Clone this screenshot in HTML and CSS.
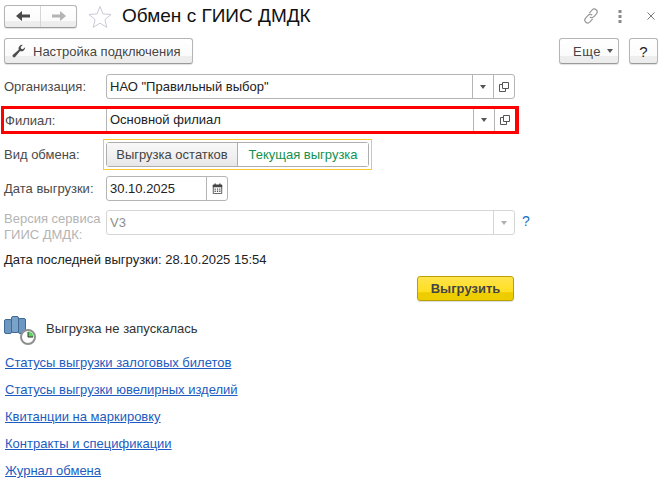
FILE: index.html
```html
<!DOCTYPE html>
<html lang="ru">
<head>
<meta charset="utf-8">
<title>Обмен с ГИИС ДМДК</title>
<link rel="stylesheet" href="styles.css">
</head>
<body>
<header class="titlebar">
  <div class="nav btn">
    <span class="nav-cell"><svg width="16" height="12" viewBox="0 0 16 12"><path d="M1 6l6-5v3.400h8v3.200H7V11z" fill="#4a4a4a"/></svg></span>
    <span class="nav-cell"><svg width="16" height="12" viewBox="0 0 16 12"><path d="M15 6L9 1v3.400H1v3.200h8V11z" fill="#b4b4b4"/></svg></span>
  </div>
  <svg class="star" width="24" height="23" viewBox="0 0 24 23"><path d="M12 1.500l3 7.400 8 .6-6.100 5.100 1.900 7.800L12 18.200l-6.800 4.200 1.900-7.800L1 9.500l8-.6z" fill="#fff" stroke="#c9c9d6"/></svg>
  <h1 class="title">Обмен с ГИИС ДМДК</h1>
  <div class="window-tools">
    <svg width="18" height="18" viewBox="0 0 16 16" fill="none" stroke="#969696" stroke-width="1"><path d="M6.500 5.500l2.600-3a2.600 2.600 0 0 1 3.900 3.400l-2.400 2.700a2.600 2.600 0 0 1-3.700.2"/><path d="M9.500 10.500l-2.600 3A2.600 2.600 0 0 1 3 10.100l2.400-2.700a2.600 2.600 0 0 1 3.700-.2"/></svg>
    <svg class="dots" width="4" height="13" viewBox="0 0 4 13" fill="#8a8a8a"><rect x="0.500" y="0" width="3" height="3"/><rect x="0.500" y="5" width="3" height="3"/><rect x="0.500" y="10" width="3" height="3"/></svg>
    <svg class="close" width="8" height="8" viewBox="0 0 8 8" stroke="#777" fill="none"><path d="M.5.500l7 7M7.500.500l-7 7"/></svg>
  </div>
</header>

<div class="commandbar">
  <button class="btn cmd settings">
    <svg width="14" height="14" viewBox="0 0 16 16"><path d="M15 3.600a4.300 4.300 0 0 1-5.700 4.500L3.800 14.600a1.800 1.800 0 0 1-2.700-2.400l6.600-5.600A4.300 4.300 0 0 1 12.300 1L9.900 3.400l.5 2 2 .5z" fill="#4d4d4d"/></svg>
    Настройка подключения
  </button>
  <button class="btn cmd more"><span class="more-text">Еще</span><i class="caret"></i></button>
  <button class="btn cmd help">?</button>
</div>

<main class="form">
  <div class="row row-org">
    <label class="label">Организация:</label>
    <div class="field wide">
      <span class="value">НАО "Правильный выбор"</span>
      <span class="cell"><i class="caret"></i></span>
      <span class="cell"><svg width="10" height="10" viewBox="0 0 10 10" fill="none" stroke="#555"><path d="M3.500.500h6v6h-6z"/><path d="M3.500 2.500H.500v7h6V6.500"/></svg></span>
    </div>
  </div>
  <div class="row row-highlight">
    <label class="label">Филиал:</label>
    <div class="field wide">
      <span class="value">Основной филиал</span>
      <span class="cell"><i class="caret"></i></span>
      <span class="cell"><svg width="10" height="10" viewBox="0 0 10 10" fill="none" stroke="#555"><path d="M3.500.500h6v6h-6z"/><path d="M3.500 2.500H.500v7h6V6.500"/></svg></span>
    </div>
  </div>
  <div class="row row-mode">
    <label class="label">Вид обмена:</label>
    <div class="toggle-frame">
      <div class="toggle">
        <span class="opt opt-off">Выгрузка остатков</span>
        <span class="opt opt-on">Текущая выгрузка</span>
      </div>
    </div>
  </div>
  <div class="row row-date">
    <label class="label">Дата выгрузки:</label>
    <div class="field date">
      <span class="value">30.10.2025</span>
      <span class="cell"><svg width="11" height="11" viewBox="0 0 13 13"><path d="M1.500 2.500h10v10h-10z" fill="#fff" stroke="#444"/><path d="M1 2h11v3H1zM3 .500h1.500V3H3zM8.500.500H10V3H8.500z" fill="#444"/><path d="M3 6.500h1.500V8H3zM5.800 6.500h1.500V8H5.800zM8.500 6.500H10V8H8.500zM3 9h1.500v1.500H3zM5.800 9h1.500v1.500H5.800zM8.500 9H10v1.500H8.500z" fill="#555"/></svg></span>
    </div>
  </div>
  <div class="row row-version">
    <label class="label label-muted">Версия сервиса ГИИС ДМДК:</label>
    <div class="field wide field-muted">
      <span class="value">V3</span>
      <span class="cell"><i class="caret"></i></span>
    </div>
    <a class="hint">?</a>
  </div>
  <p class="last-date">Дата последней выгрузки: 28.10.2025 15:54</p>
  <div class="action">
    <button class="btn-primary">Выгрузить</button>
  </div>
  <div class="status">
    <svg width="34" height="34" viewBox="0 0 34 34">
      <rect x="2.500" y="8.500" width="7" height="14" rx="1.500" fill="#6d97c0" stroke="#3f6a93"/>
      <rect x="9.500" y="5.500" width="7" height="16" rx="1.500" fill="#7ba3ca" stroke="#3f6a93"/>
      <rect x="16.500" y="7.500" width="7" height="15" rx="1.500" fill="#6d97c0" stroke="#3f6a93"/>
      <circle cx="26" cy="26" r="7" fill="#fff" stroke="#8f8f8f" stroke-width="2"/>
      <path d="M26 26v-5.500a5.500 5.500 0 0 1 5.500 5.500z" fill="#5fd35f"/>
      <path d="M26 21v5h5" fill="none" stroke="#333"/>
    </svg>
    <span class="status-text">Выгрузка не запускалась</span>
  </div>
  <nav class="links">
    <a href="#">Статусы выгрузки залоговых билетов</a>
    <a href="#">Статусы выгрузки ювелирных изделий</a>
    <a href="#">Квитанции на маркировку</a>
    <a href="#">Контракты и спецификации</a>
    <a href="#">Журнал обмена</a>
  </nav>
</main>
</body>
</html>
```
FILE: styles.css
```css
* { box-sizing: border-box; }
html, body { margin: 0; padding: 0; }
body {
  width: 665px;
  height: 483px;
  overflow: hidden;
  background: #fff;
  color: #333;
  font: 13px/15px "Liberation Sans", Arial, sans-serif;
}
.btn {
  background: linear-gradient(#fff 0, #fbfbfb 70%, #eeeeee 72%, #ececec 100%);
  border: 1px solid #b5b5b5;
  border-bottom-color: #9a9a9a;
  border-radius: 3px;
  box-shadow: 0 1px 1px rgba(0,0,0,.12);
}
.titlebar {
  display: flex;
  align-items: center;
  height: 28px;
  padding: 4px 0 0 4px;
}
.nav { display: flex; width: 73px; height: 23px; }
.nav-cell {
  flex: 1;
  display: flex;
  align-items: center;
  justify-content: center;
}
.nav-cell + .nav-cell { border-left: 1px solid #d6d6d6; }
.star { margin-left: 11px; }
.title {
  margin: 0 0 0 10px;
  font-size: 19px;
  line-height: 24px;
  font-weight: 400;
  color: #111;
}
.window-tools {
  margin-left: auto;
  display: flex;
  align-items: center;
  padding-right: 10px;
}
.dots { margin-left: 18px; }
.close { margin-left: 25px; }
.commandbar {
  display: flex;
  gap: 10px;
  padding: 10px 7px 0 4px;
}
.cmd {
  height: 26px;
  padding: 0;
  font: inherit;
  color: #444;
  display: flex;
  align-items: center;
  justify-content: center;
}
.settings { width: 189px; gap: 7px; margin-right: auto; justify-content: flex-start; padding-left: 7px; }
.more { width: 60px; gap: 6px; justify-content: flex-end; padding-right: 5px; }
.more-text { letter-spacing: .5px; }
.help { width: 29px; font-size: 15px; font-weight: 400; color: #222; }
.caret {
  display: inline-block;
  width: 0;
  height: 0;
  border: 3.500px solid transparent;
  border-top: 4px solid #555;
  border-bottom: 0;
}
.form { padding-top: 10px; }
.row { display: flex; align-items: center; }
.label { width: 106px; padding-left: 4px; color: #4a4a4a; flex: none; }
.field {
  display: flex;
  align-items: stretch;
  height: 25px;
  background: #fff;
  border: 1px solid #b5b5b5;
  border-radius: 3px;
  color: #222;
}
.wide { width: 409px; }
.value { flex: 1; padding-left: 3px; line-height: 23px; }
.cell {
  width: 21px;
  flex: none;
  border-left: 1px solid #b5b5b5;
  display: flex;
  align-items: center;
  justify-content: center;
}
.row-highlight {
  margin: 7px 0 0 1px;
  width: 518px;
  height: 28px;
  border: 3px solid #f00;
  border-right-width: 4px;
}
.row-highlight .label { width: 102px; padding-left: 1px; }
.row-highlight .field { height: 22px; border-right: 0; border-top: 0; border-bottom: 0; border-radius: 0; }
.row-highlight .value { line-height: 22px; }
.row-mode { margin-top: 5px; }
.toggle-frame {
  margin-left: -3px;
  width: 269px;
  height: 31px;
  padding: 2px;
  border: 1px solid #fbc92c;
}
.toggle {
  display: flex;
  height: 25px;
  border: 1px solid #aeaeae;
  border-radius: 3px;
}
.opt { display: flex; align-items: center; justify-content: center; }
.opt-off {
  width: 131px;
  border-right: 1px solid #aeaeae;
  background: linear-gradient(#f8f8f8 0, #f0f0f0 60%, #e6e6e6 100%);
  color: #444;
}
.opt-on { flex: 1; color: #15924f; background: #fff; }
.row-date { margin-top: 6px; }
.date { width: 122px; }
.row-version { margin-top: 9px; align-items: flex-start; }
.label-muted { color: #b4b4b4; padding-top: 1px; line-height: 16px; }
.field-muted { border-color: #d6d6d6; color: #8e8e8e; }
.field-muted .cell { border-color: #d6d6d6; }
.field-muted .caret { border-top-color: #b0b0b0; }
.hint { margin: 4px 0 0 7px; font-size: 14px; color: #1c6fc0; }
.last-date { margin: 9px 0 0; padding-left: 4px; color: #222; }
.action { display: flex; padding: 9px 0 0 417px; }
.btn-primary {
  width: 97px;
  height: 25px;
  padding: 0;
  font: inherit;
  font-weight: 700;
  color: #444;
  background: linear-gradient(#ffe34d 0, #ffdf20 65%, #eecd00 68%, #eecd00 100%);
  border: 1px solid #b9a100;
  border-radius: 3px;
  box-shadow: 0 1px 1px rgba(0,0,0,.15);
}
.status {
  display: flex;
  align-items: center;
  gap: 10px;
  margin-top: 10px;
  padding-left: 2px;
  color: #333;
}
.status-text { margin-top: 0; }
.links { display: flex; flex-direction: column; align-items: flex-start; gap: 12px; margin-top: 10px; padding-left: 5px; }
.links a { color: #1c5cc0; text-decoration: underline; }
```
